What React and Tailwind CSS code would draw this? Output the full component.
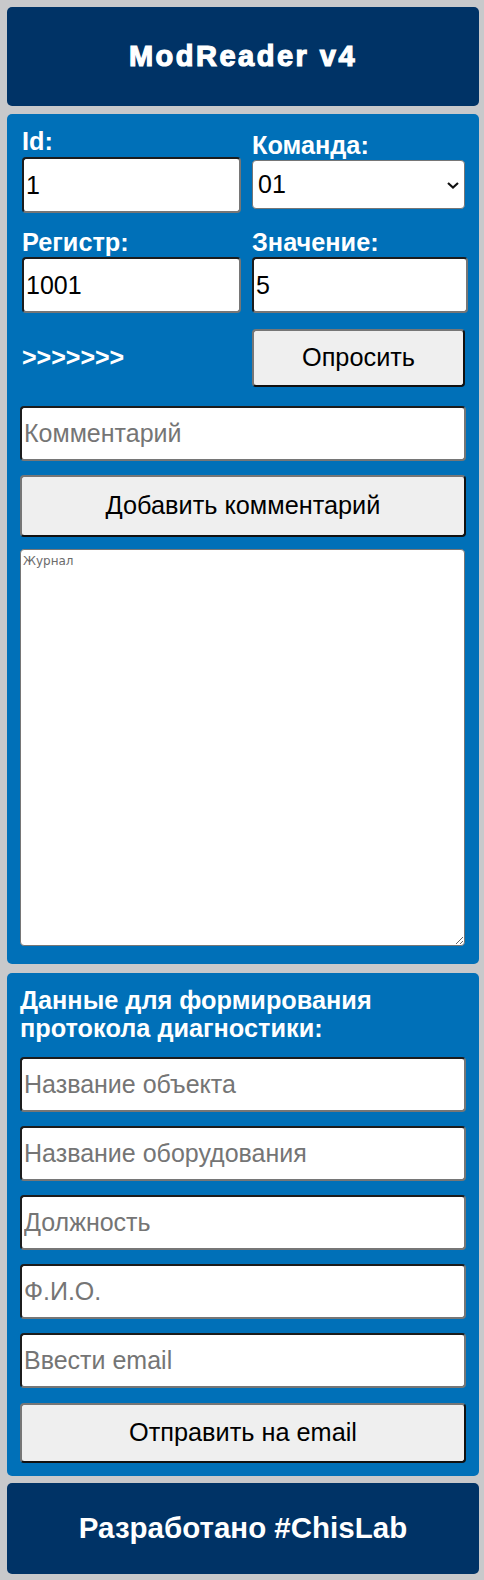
import React from "react";

const F = { fontFamily: '"Liberation Sans", Arial, sans-serif' };

function TextInput({ value, placeholder, className = "" }) {
  return (
    <input
      type="text"
      defaultValue={value}
      placeholder={placeholder}
      className={
        "block h-[55px] rounded-[4px] border-2 border-t-[#1c1c1c] border-l-[#1c1c1c] border-b-[#767676] border-r-[#767676] bg-white px-[2px] text-[25px] text-black placeholder:text-[#757575] outline-none " +
        className
      }
      style={F}
    />
  );
}

function Btn({ children, className = "" }) {
  return (
    <button
      className={
        "flex items-center justify-center rounded-[4px] border-2 border-t-[#767676] border-l-[#767676] border-b-[#111] border-r-[#111] bg-[#efefef] text-[25.3px] text-black " +
        className
      }
      style={F}
    >
      {children}
    </button>
  );
}

export default function App() {
  return (
    <div
      className="min-h-[1580px] bg-[#c8c9cb] pt-[7px] pl-[7px] pr-[5px] pb-[6px]"
      style={F}
    >
      {/* Header */}
      <div className="flex h-[99px] items-center justify-center rounded-[5px] bg-[#003366]">
        <h1 className="text-[29px] font-bold tracking-[2.5px] text-white [-webkit-text-stroke:1.2px_white]">
          ModReader v4
        </h1>
      </div>

      {/* Panel 1 */}
      <div className="mt-[8px] flex h-[850px] flex-col rounded-[5px] bg-[#0070b8] px-[13px] pt-[13px]">
        <div className="flex items-center pl-[2px]">
          <div className="flex w-[219px] flex-col">
            <label className="h-[28px] text-[25.3px] font-bold leading-[28px] text-white">Id:</label>
            <TextInput value="1" className="mt-[2px] h-[56px] w-[219px]" />
          </div>
          <div className="ml-[11px] flex w-[213px] flex-col">
            <label className="h-[28px] text-[25.3px] font-bold leading-[28px] text-white">Команда:</label>
            <div className="relative mt-[1px] h-[49px] w-[213px] rounded-[4px] border border-[#767676] bg-white">
              <span className="absolute left-[5px] top-[9px] text-[25px] leading-[28px] text-black">01</span>
              <svg
                className="absolute right-[5px] top-[21px]"
                width="12"
                height="7"
                viewBox="0 0 12 7"
              >
                <path d="M1 1 L6 5.5 L11 1" fill="none" stroke="#111" strokeWidth="2.2" />
              </svg>
            </div>
          </div>
        </div>

        <div className="mt-[15px] flex pl-[2px]">
          <div className="flex w-[219px] flex-col">
            <label className="h-[28px] text-[25.3px] font-bold leading-[28px] text-white">Регистр:</label>
            <TextInput value="1001" className="mt-[1px] h-[56px] w-[219px]" />
          </div>
          <div className="ml-[11px] flex w-[216px] flex-col">
            <label className="h-[28px] text-[25.3px] font-bold leading-[28px] text-white">Значение:</label>
            <TextInput value="5" className="mt-[1px] h-[56px] w-[216px]" />
          </div>
        </div>

        <div className="mt-[16px] flex items-center pl-[2px]">
          <div className="w-[219px] text-[25px] font-bold text-white">&gt;&gt;&gt;&gt;&gt;&gt;&gt;</div>
          <Btn className="ml-[11px] h-[58px] w-[213px]">Опросить</Btn>
        </div>

        <TextInput placeholder="Комментарий" className="mt-[19px] w-[446px]" />

        <Btn className="mt-[14px] h-[62px] w-[446px]">Добавить комментарий</Btn>

        <textarea
          placeholder="Журнал"
          className="mt-[12px] block h-[397px] w-[445px] rounded-[4px] border border-[#767676] bg-white px-[2px] py-[2px] text-[12px] text-black placeholder:text-[#6b6b6b] outline-none"
          style={{ fontFamily: '"DejaVu Sans", sans-serif' }}
        />
      </div>

      {/* Panel 2 */}
      <div className="mt-[9px] flex h-[503px] flex-col rounded-[5px] bg-[#0070b8] px-[13px] pt-[13px]">
        <h2 className="text-[25.3px] font-bold leading-[28px] text-white">
          Данные для формирования протокола диагностики:
        </h2>
        <TextInput placeholder="Название объекта" className="mt-[15px] w-[446px]" />
        <TextInput placeholder="Название оборудования" className="mt-[14px] w-[446px]" />
        <TextInput placeholder="Должность" className="mt-[14px] w-[446px]" />
        <TextInput placeholder="Ф.И.О." className="mt-[14px] w-[446px]" />
        <TextInput placeholder="Ввести email" className="mt-[14px] w-[446px]" />
        <Btn className="mt-[15px] h-[60px] w-[446px]">Отправить на email</Btn>
      </div>

      {/* Footer */}
      <div className="mt-[7px] flex h-[91px] items-center justify-center rounded-[5px] bg-[#003366]">
        <span className="text-[29.5px] font-bold text-white">Разработано #ChisLab</span>
      </div>
    </div>
  );
}
